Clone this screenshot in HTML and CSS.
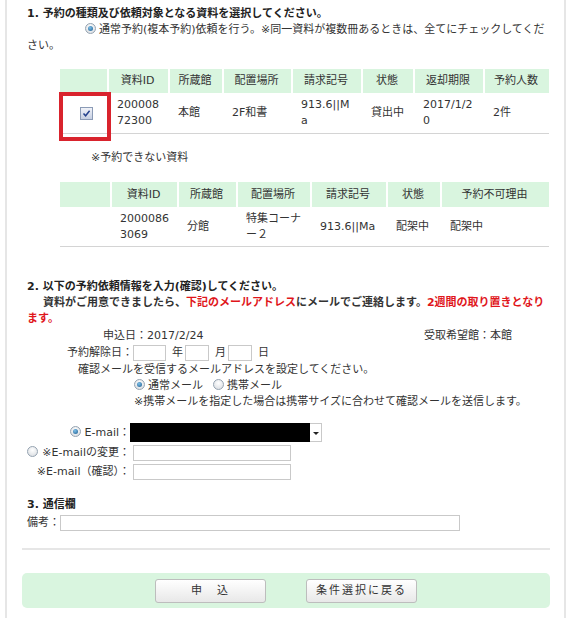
FILE: index.html
```html
<!DOCTYPE html>
<html lang="ja">
<head>
<meta charset="utf-8">
<title>予約依頼</title>
<link rel="stylesheet" href="styles.css">
</head>
<body>
<div class="page">
  <section class="sec sec-select">
    <h2 class="sec-title">1. 予約の種類及び依頼対象となる資料を選択してください。</h2>
    <p class="lead"><span class="radio on"></span>通常予約(複本予約)依頼を行う。※同一資料が複数冊あるときは、全てにチェックしてくだ<br>さい。</p>
    <table class="grid grid-ok">
      <colgroup><col><col><col><col><col><col><col><col></colgroup>
      <thead>
        <tr><th></th><th>資料ID</th><th>所蔵館</th><th>配置場所</th><th>請求記号</th><th>状態</th><th>返却期限</th><th>予約人数</th></tr>
      </thead>
      <tbody>
        <tr>
          <td class="check-cell"><span class="checkbox"><svg viewBox="0 0 11 11" width="11" height="11"><path d="M2.5 5.6 L4.6 7.8 L8.6 2.8" fill="none" stroke="#23408c" stroke-width="1.5"/></svg></span><span class="highlight"></span></td>
          <td>20000872300</td><td>本館</td><td>2F和書</td><td>913.6||Ma</td><td>貸出中</td><td>2017/1/20</td><td>2件</td>
        </tr>
      </tbody>
    </table>
    <p class="note">※予約できない資料</p>
    <table class="grid grid-ng">
      <colgroup><col><col><col><col><col><col><col></colgroup>
      <thead>
        <tr><th></th><th>資料ID</th><th>所蔵館</th><th>配置場所</th><th>請求記号</th><th>状態</th><th>予約不可理由</th></tr>
      </thead>
      <tbody>
        <tr><td></td><td>20000863069</td><td>分館</td><td>特集コーナー２</td><td>913.6||Ma</td><td>配架中</td><td>配架中</td></tr>
      </tbody>
    </table>
  </section>

  <section class="sec sec-request">
    <h2 class="sec-title">2. 以下の予約依頼情報を入力(確認)してください。</h2>
    <p class="notice">資料がご用意できましたら、<em>下記のメールアドレス</em>にメールでご連絡します。<em>2週間の取り置きとなり<br>ます。</em></p>
    <div class="apply-row"><span class="apply-date">申込日：2017/2/24</span><span>受取希望館：本館</span></div>
    <div class="cancel-row"><span>予約解除日：</span><input class="field field-year" type="text"><span class="unit">年</span><input class="field field-md" type="text"><span class="unit">月</span><input class="field field-md" type="text"><span class="unit">日</span></div>
    <p class="mail-guide">確認メールを受信するメールアドレスを設定してください。</p>
    <div class="mail-type"><span class="opt"><span class="radio on"></span>通常メール</span><span class="opt"><span class="radio"></span>携帯メール</span></div>
    <p class="mail-note">※携帯メールを指定した場合は携帯サイズに合わせて確認メールを送信します。</p>
    <div class="mail-grid">
      <span class="mail-label"><span class="radio on"></span>E-mail：</span>
      <div class="select"><span class="redact"></span><span class="arrow"></span></div>
      <span class="mail-label"><span class="radio"></span>※E-mailの変更：</span>
      <input class="field field-mail" type="text">
      <span class="mail-label">※E-mail（確認）：</span>
      <input class="field field-mail" type="text">
    </div>
  </section>

  <section class="sec sec-comm">
    <h2 class="sec-title">3. 通信欄</h2>
    <div class="remark-row"><span>備考：</span><input class="field field-remark" type="text"></div>
  </section>

  <hr class="divider">

  <div class="actions">
    <button class="btn" type="button">申　込</button>
    <button class="btn" type="button">条件選択に戻る</button>
  </div>
</div>
</body>
</html>
```
FILE: styles.css
```css
* { box-sizing: border-box; }
html, body { margin: 0; padding: 0; background: #fff; }
body {
  font-family: "DejaVu Sans", "Noto Sans CJK JP", sans-serif;
  font-size: 11px;
  line-height: 16px;
  color: #333;
}
p { margin: 0; }

.page {
  margin-left: 5px;
  width: 561px;
  min-height: 100vh;
  border-left: 2px solid #e6e6e6;
  border-right: 2px solid #e6e6e6;
  padding: 6px 14px 0 15px;
}

.sec-title {
  margin: 0;
  padding-left: 5px;
  font-size: 11px;
  line-height: 16px;
  font-weight: bold;
  color: #222;
}

/* radio / checkbox look */
.radio {
  display: inline-block;
  width: 11px;
  height: 11px;
  border: 1px solid #95a3b1;
  border-radius: 50%;
  background: radial-gradient(circle at 50% 35%, #ffffff, #d5d9de);
  vertical-align: -1px;
  margin-right: 3px;
  position: relative;
  text-indent: 0;
}
.radio.on::after {
  content: "";
  position: absolute;
  left: 2px;
  top: 2px;
  width: 5px;
  height: 5px;
  border-radius: 50%;
  background: radial-gradient(circle at 40% 35%, #7cc0ea, #1d5a8c);
}

.lead { padding-left: 5px; text-indent: 58px; }

/* tables */
.grid {
  border-collapse: separate;
  border-spacing: 0;
  table-layout: fixed;
  width: 489px;
  margin-left: 38px;
}
.grid-ok { margin-top: 15px; }
.grid-ng { margin-top: 16px; }
.grid th {
  background: #d9f5df;
  font-weight: normal;
  height: 24px;
  padding: 0;
  text-align: center;
  color: #333;
}
.grid th + th { box-shadow: inset 2px 0 0 #fff; }
.grid td {
  padding: 4px 8px 4px 10px;
  border-bottom: 1px solid #d4d4d4;
  vertical-align: middle;
  text-align: left;
  word-break: break-all;
  line-break: anywhere;
}
.grid-ng th { height: 25px; }
.grid-ng td { padding-bottom: 3px; }

.grid-ok col:nth-child(1) { width: 47px; }
.grid-ok col:nth-child(2) { width: 61px; }
.grid-ok col:nth-child(3) { width: 54px; }
.grid-ok col:nth-child(4) { width: 69px; }
.grid-ok col:nth-child(5) { width: 70px; }
.grid-ok col:nth-child(6) { width: 52px; }
.grid-ok col:nth-child(7) { width: 70px; }
.grid-ok col:nth-child(8) { width: 66px; }

.grid-ng col:nth-child(1) { width: 50px; }
.grid-ng col:nth-child(2) { width: 67px; }
.grid-ng col:nth-child(3) { width: 59px; }
.grid-ng col:nth-child(4) { width: 74px; }
.grid-ng col:nth-child(5) { width: 76px; }
.grid-ng col:nth-child(6) { width: 54px; }
.grid-ng col:nth-child(7) { width: 109px; }

.grid td.check-cell {
  position: relative;
  padding: 0 0 0 6px;
  text-align: center;
}
.checkbox {
  display: inline-block;
  width: 13px;
  height: 13px;
  border: 1px solid #8b9bb6;
  background: linear-gradient(#f1f3f9, #c6cfe2);
  vertical-align: middle;
}
.checkbox svg { display: block; }
.highlight {
  position: absolute;
  left: -1px;
  top: -1px;
  width: 52px;
  height: 49px;
  border: 4px solid #d9232d;
}

.note { margin-top: 16px; padding-left: 69px; }

/* section 2 */
.sec-request { margin-top: 32px; }
.notice {
  padding-left: 5px;
  text-indent: 16px;
  font-weight: bold;
  color: #333;
}
.notice em { font-style: normal; color: #e0161b; }

.apply-row { display: flex; margin-top: 1px; padding-left: 81px; }
.apply-date { width: 321px; }

.field {
  height: 16px;
  margin: 0;
  padding: 0 2px;
  border: 1px solid #c9c9c9;
  background: #fff;
  font: inherit;
  outline: none;
}
.cancel-row {
  display: flex;
  align-items: center;
  height: 18px;
  padding-left: 45px;
}
.field-year { width: 33px; }
.field-md { width: 24px; }
.unit { margin: 0 2px 0 6px; }

.mail-guide { padding-left: 56px; }
.mail-type { display: flex; gap: 10px; padding-left: 112px; }
.mail-note { padding-left: 112px; }

.mail-grid {
  display: grid;
  grid-template-columns: 108px auto;
  justify-content: start;
  align-items: center;
  row-gap: 3px;
  margin-top: 13px;
}
.mail-label { text-align: right; white-space: nowrap; }
.mail-label .radio { margin-right: 4px; }
.select {
  display: flex;
  width: 192px;
  height: 19px;
  border: 1px solid #c9c9c9;
  background: #fff;
}
.redact { width: 180px; margin: -1px 0 -1px -1px; background: #000; }
.arrow {
  flex: 1;
  position: relative;
}
.arrow::after {
  content: "";
  position: absolute;
  left: 3px;
  top: 8px;
  border-left: 3px solid transparent;
  border-right: 3px solid transparent;
  border-top: 3px solid #222;
}
.field-mail { width: 158px; margin-left: 3px; }

/* section 3 */
.sec-comm { margin-top: 17px; }
.remark-row {
  display: flex;
  align-items: center;
  margin-top: 2px;
  padding-left: 5px;
}
.field-remark { width: 400px; }

.divider {
  margin: 17px 0 0;
  height: 0;
  border: 0;
  border-top: 2px solid #e6e6e6;
}

.actions {
  margin-top: 23px;
  height: 35px;
  background: #d9f5df;
  border-radius: 5px;
  display: flex;
  justify-content: center;
  align-items: center;
  gap: 40px;
}
.btn {
  width: 111px;
  height: 24px;
  padding: 0;
  border: 1px solid #bdbdbd;
  border-radius: 3px;
  background: linear-gradient(#ffffff, #e8e8e8);
  font: inherit;
  color: #333;
  letter-spacing: 2px;
}
```
